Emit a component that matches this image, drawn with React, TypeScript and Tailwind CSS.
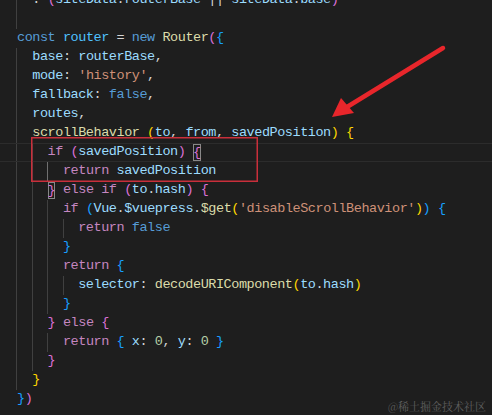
const K = '#569cd6';
const C = '#c586c0';
const V = '#9cdcfe';
const CN = '#4fc1ff';
const F = '#dcdcaa';
const S = '#ce9178';
const N = '#b5cea8';
const P = '#d4d4d4';
const Y = '#ffd700';
const O = '#da70d6';
const B = '#179fff';

type Tok = [string, string, boolean?];

const lines: { indent: number; guides: number; toks: Tok[] }[] = [
  { indent: 2, guides: 1, toks: [[': ', P], ['(', O], ['siteData', V], ['.', P], ['routerBase', V], [' || ', P], ['siteData', V], ['.', P], ['base', V], [')', O]] },
  { indent: 0, guides: 1, toks: [] },
  { indent: 0, guides: 0, toks: [['const', K], [' ', P], ['router', CN], [' = ', P], ['new', K], [' ', P], ['Router', F], ['(', O], ['{', B]] },
  { indent: 2, guides: 1, toks: [['base', V], [': ', P], ['routerBase', V], [',', P]] },
  { indent: 2, guides: 1, toks: [['mode', V], [': ', P], ["'history'", S], [',', P]] },
  { indent: 2, guides: 1, toks: [['fallback', V], [': ', P], ['false', K], [',', P]] },
  { indent: 2, guides: 1, toks: [['routes', V], [',', P]] },
  { indent: 2, guides: 1, toks: [['scrollBehavior', F], [' ', P], ['(', Y], ['to', V], [', ', P], ['from', V], [', ', P], ['savedPosition', V], [')', Y], [' ', P], ['{', Y]] },
  { indent: 4, guides: 2, toks: [['if', C], [' ', P], ['(', O], ['savedPosition', V], [')', O], [' ', P], ['{', O, true]] },
  { indent: 6, guides: 3, toks: [['return', C], [' ', P], ['savedPosition', V]] },
  { indent: 4, guides: 2, toks: [['}', O, true], [' ', P], ['else', C], [' ', P], ['if', C], [' ', P], ['(', O], ['to', V], ['.', P], ['hash', V], [')', O], [' ', P], ['{', O]] },
  { indent: 6, guides: 3, toks: [['if', C], [' ', P], ['(', B], ['Vue', V], ['.', P], ['$vuepress', V], ['.', P], ['$get', F], ['(', Y], ["'disableScrollBehavior'", S], [')', Y], [')', B], [' ', P], ['{', B]] },
  { indent: 8, guides: 4, toks: [['return', C], [' ', P], ['false', K]] },
  { indent: 6, guides: 3, toks: [['}', B]] },
  { indent: 6, guides: 3, toks: [['return', C], [' ', P], ['{', B]] },
  { indent: 8, guides: 4, toks: [['selector', V], [': ', P], ['decodeURIComponent', F], ['(', Y], ['to', V], ['.', P], ['hash', V], [')', Y]] },
  { indent: 6, guides: 3, toks: [['}', B]] },
  { indent: 4, guides: 2, toks: [['}', O], [' ', P], ['else', C], [' ', P], ['{', O]] },
  { indent: 6, guides: 3, toks: [['return', C], [' ', P], ['{', B], [' ', P], ['x', V], [': ', P], ['0', N], [', ', P], ['y', V], [': ', P], ['0', N], [' ', P], ['}', B]] },
  { indent: 4, guides: 2, toks: [['}', O]] },
  { indent: 2, guides: 1, toks: [['}', Y]] },
  { indent: 0, guides: 0, toks: [['}', B], [')', O]] },
];

const guideLeft = ['left-[16px]', 'left-[31.5px]', 'left-[47px]', 'left-[62.5px]'];

export default function App() {
  return (
    <div className="relative w-full h-[415px] overflow-hidden bg-[#1e1e1e]">
      <div
        className="flex flex-col -mt-[9px] text-[13.5px] tracking-[-0.45px]"
        style={{ fontFamily: '"Liberation Mono", "DejaVu Sans Mono", monospace' }}
      >
        {lines.map((ln, i) => (
          <div
            key={i}
            className={
              'relative h-[19px] flex items-center whitespace-pre pl-[17px] ' +
              (i === 8 ? 'border-y border-[#2c2c2c]' : '')
            }
          >
            {Array.from({ length: ln.guides }).map((_, g) => (
              <span
                key={g}
                className={
                  'absolute top-0 bottom-0 w-px ' +
                  guideLeft[g] +
                  (i === 9 && g === 2 ? ' bg-[#707070]' : ' bg-[#404040]')
                }
              />
            ))}
            <span>{' '.repeat(ln.indent)}</span>
            {ln.toks.map(([t, c, box], j) =>
              box ? (
                <span key={j} className="inline-block leading-[17px] shadow-[inset_0_0_0_1px_#888]" style={{ color: c }}>
                  {t}
                </span>
              ) : (
                <span key={j} style={{ color: c }}>
                  {t}
                </span>
              )
            )}
          </div>
        ))}
      </div>

      {/* red highlight box */}
      <div className="absolute left-[31px] top-[137px] w-[227px] h-[45px] shadow-[inset_0_0_0_1.5px_#c92f3b]" />

      {/* arrow */}
      <svg className="absolute inset-0 pointer-events-none" width="492" height="415" viewBox="0 0 492 415">
        <line x1="443" y1="48" x2="347" y2="107" stroke="#e8262b" strokeWidth="4.5" strokeLinecap="round" />
        <polygon points="332,117 341,98 354,113" fill="#e8262b" />
      </svg>

      <div
        className="absolute right-[6px] bottom-[1px] text-[11px] text-[#5e5e5e]"
        style={{ fontFamily: '"Noto Serif CJK SC", "Noto Sans CJK SC", serif' }}
      >
        @稀土掘金技术社区
      </div>
    </div>
  );
}
